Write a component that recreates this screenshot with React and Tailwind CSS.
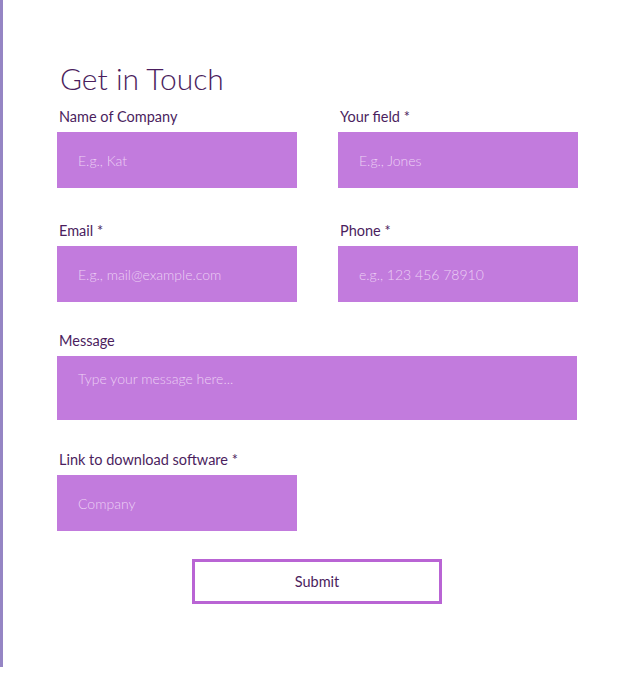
import React from "react";

const font = { fontFamily: "Lato, 'Noto Sans', sans-serif" };

function Field({ label, placeholder, className = "" }) {
  return (
    <div className={className}>
      <label className="block text-[14.5px] leading-[22px] text-[#4b1e5e] mb-[4px] pl-[2px]">
        {label}
      </label>
      <input
        type="text"
        placeholder={placeholder}
        className="block w-[240px] h-[56px] bg-[#c27bdd] px-[21px] text-[14px] font-light text-white placeholder:text-[#ecd0f4] outline-none"
      />
    </div>
  );
}

export default function App() {
  return (
    <div className="bg-white w-[631px] h-[674px]" style={font}>
      <div className="h-[667px] border-l-[3px] border-[#9585c4] pl-[54px] pt-[60px]">
        <h1 className="text-[30px] leading-[36px] font-light text-[#4b1e5e] pl-[3px] mb-[10px]">
          Get in Touch
        </h1>

        <form onSubmit={(e) => e.preventDefault()}>
          <div className="grid grid-cols-[240px_240px] gap-x-[41px] gap-y-[32px]">
            <Field label="Name of Company" placeholder="E.g., Kat" />
            <Field label="Your field *" placeholder="E.g., Jones" />
            <Field label="Email *" placeholder="E.g., mail@example.com" />
            <Field label="Phone *" placeholder="e.g., 123 456 78910" />
          </div>

          <div className="mt-[28px]">
            <label className="block text-[14.5px] leading-[22px] text-[#4b1e5e] mb-[4px] pl-[2px]">
              Message
            </label>
            <textarea
              placeholder="Type your message here..."
              className="block w-[520px] h-[64px] resize-none bg-[#c27bdd] px-[21px] pt-[12px] text-[14px] font-light text-white placeholder:text-[#ecd0f4] outline-none"
            />
          </div>

          <Field
            className="mt-[29px]"
            label="Link to download software *"
            placeholder="Company"
          />

          <div className="mt-[28px] pl-[135px]">
            <button
              type="submit"
              className="w-[250px] h-[45px] border-[3px] border-[#b964d4] bg-white text-[14.5px] text-[#4b1e5e]"
            >
              Submit
            </button>
          </div>
        </form>
      </div>
    </div>
  );
}
